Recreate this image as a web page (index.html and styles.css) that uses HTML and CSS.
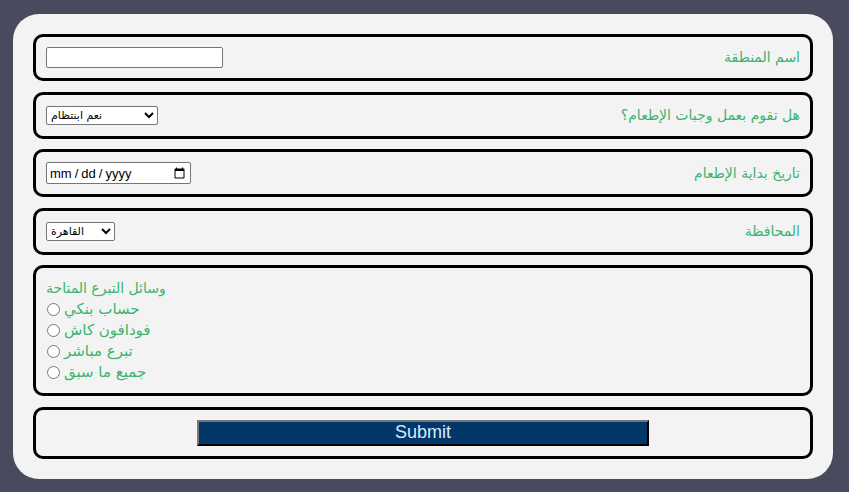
FILE: index.html
```html
<!DOCTYPE html>
<html lang="ar">
<head>
<meta charset="utf-8">
<title>Form</title>
<link rel="stylesheet" href="styles.css">
</head>
<body>
<form class="card">
  <div class="field">
    <label class="label">اسم المنطقة</label>
    <input class="text" type="text">
  </div>
  <div class="field">
    <label class="label">هل تقوم بعمل وجبات الإطعام؟</label>
    <select class="sel sel-wide"><option>نعم ابنتظام</option></select>
  </div>
  <div class="field">
    <label class="label">تاريخ بداية الإطعام</label>
    <input class="date" type="date">
  </div>
  <div class="field">
    <label class="label">المحافظة</label>
    <select class="sel sel-narrow"><option>القاهرة</option></select>
  </div>
  <div class="field field-list">
    <div class="list-title">وسائل التبرع المتاحة</div>
    <label class="opt"><input type="radio" name="d"><span>حساب بنكي</span></label>
    <label class="opt"><input type="radio" name="d"><span>فودافون كاش</span></label>
    <label class="opt"><input type="radio" name="d"><span>تبرع مباشر</span></label>
    <label class="opt"><input type="radio" name="d"><span>جميع ما سبق</span></label>
  </div>
  <div class="field field-submit">
    <button class="submit" type="button">Submit</button>
  </div>
</form>
</body>
</html>
```
FILE: styles.css
```css
html, body {
  margin: 0;
  padding: 0;
}
body {
  background: #484a5e;
  padding: 14px 16px 13px 13px;
  font-family: "DejaVu Sans", sans-serif;
}
.card {
  background: #f3f3f3;
  border-radius: 26px;
  padding: 20px;
  display: flex;
  flex-direction: column;
  gap: 10.6px;
}
.field {
  border: 3px solid #000;
  border-radius: 10px;
  padding: 10px;
  display: flex;
  flex-direction: row-reverse;
  justify-content: space-between;
  align-items: center;
  min-height: 21px;
}
.label {
  color: #3cb371;
  font-size: 14px;
  line-height: 17px;
  direction: rtl;
}
.text {
  width: 177px;
  height: 21px;
  box-sizing: border-box;
  border: 1px solid #767676;
  border-radius: 2px;
  background: #fff;
  margin: 0;
}
.sel {
  height: 19px;
  box-sizing: border-box;
  font-size: 11px;
  font-family: "DejaVu Sans", sans-serif;
  border: 1px solid #767676;
  border-radius: 2px;
  background: #fff;
  margin: 0;
}
.sel-wide { width: 112px; }
.sel-narrow { width: 69px; }
.date {
  width: 145px;
  height: 22px;
  box-sizing: border-box;
  border: 1px solid #767676;
  border-radius: 2px;
  background: #fff;
  margin: 0;
  font-family: "Liberation Sans", sans-serif;
  font-size: 13px;
  padding: 1px 2px;
}
.date::-webkit-datetime-edit-text {
  padding: 0 2px;
}
.field-list {
  flex-direction: column;
  align-items: flex-start;
  justify-content: flex-start;
}
.list-title {
  color: #3cb371;
  font-size: 14px;
  line-height: 21px;
}
.opt {
  display: flex;
  align-items: center;
  gap: 4px;
  color: #3cb371;
  font-size: 15px;
  line-height: 21px;
}
.opt input {
  margin: 0 0 0 1px;
  width: 13px;
  height: 13px;
}
.field-submit {
  justify-content: center;
}
.submit {
  width: 60%;
  height: 26px;
  background: #03376a;
  color: #d4ecff;
  font-family: "Liberation Sans", sans-serif;
  font-size: 18px;
  border: 2px outset #777;
  border-right-color: #222;
  border-bottom-color: #222;
  padding: 0;
}
```
